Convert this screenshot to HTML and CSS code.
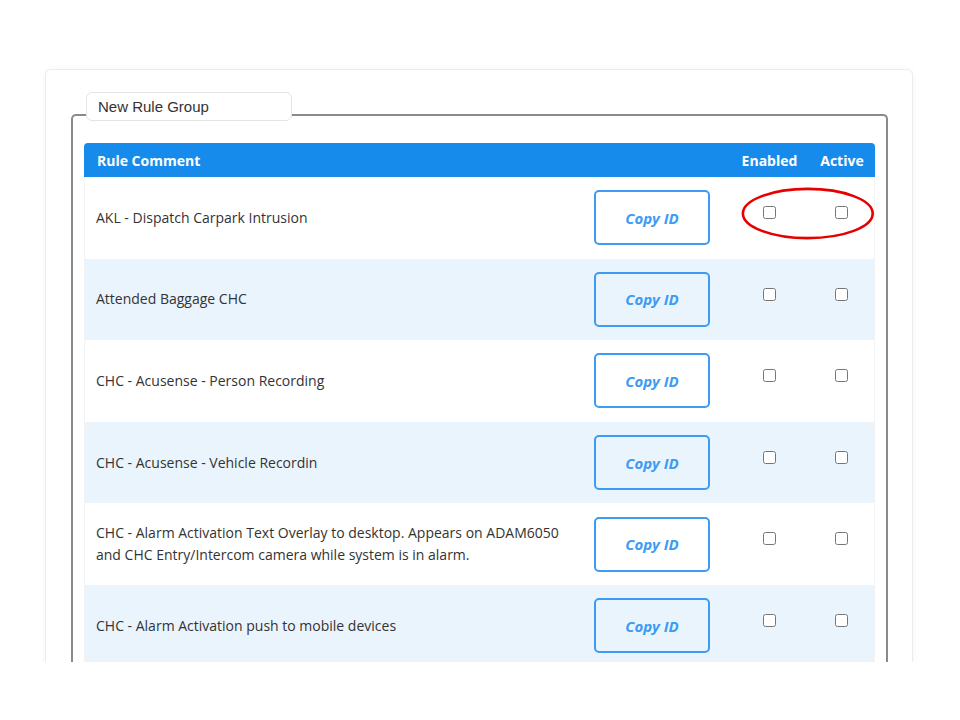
FILE: index.html
```html
<!DOCTYPE html>
<html lang="en">
<head>
<meta charset="utf-8">
<title>Rule Groups</title>
<link rel="stylesheet" href="styles.css">
</head>
<body>
<div class="page">
  <div class="card">
    <div class="group">
      <div class="group-name">New Rule Group</div>
      <div class="rules">
        <table class="rule-table">
          <colgroup>
            <col class="col-comment">
            <col class="col-action">
            <col class="col-enabled">
            <col class="col-active">
          </colgroup>
          <thead>
            <tr>
              <th class="th-comment">Rule Comment</th>
              <th></th>
              <th class="th-check">Enabled</th>
              <th class="th-check">Active</th>
            </tr>
          </thead>
          <tbody>
            <tr>
              <td class="comment">AKL - Dispatch Carpark Intrusion</td>
              <td class="action"><button class="copy-btn" type="button">Copy ID</button></td>
              <td class="check"><input type="checkbox"></td>
              <td class="check"><input type="checkbox"></td>
            </tr>
            <tr>
              <td class="comment">Attended Baggage CHC</td>
              <td class="action"><button class="copy-btn" type="button">Copy ID</button></td>
              <td class="check"><input type="checkbox"></td>
              <td class="check"><input type="checkbox"></td>
            </tr>
            <tr>
              <td class="comment">CHC - Acusense - Person Recording</td>
              <td class="action"><button class="copy-btn" type="button">Copy ID</button></td>
              <td class="check"><input type="checkbox"></td>
              <td class="check"><input type="checkbox"></td>
            </tr>
            <tr>
              <td class="comment">CHC - Acusense - Vehicle Recordin</td>
              <td class="action"><button class="copy-btn" type="button">Copy ID</button></td>
              <td class="check"><input type="checkbox"></td>
              <td class="check"><input type="checkbox"></td>
            </tr>
            <tr>
              <td class="comment">CHC - Alarm Activation Text Overlay to desktop. Appears on ADAM6050 and CHC Entry/Intercom camera while system is in alarm.</td>
              <td class="action"><button class="copy-btn" type="button">Copy ID</button></td>
              <td class="check"><input type="checkbox"></td>
              <td class="check"><input type="checkbox"></td>
            </tr>
            <tr>
              <td class="comment">CHC - Alarm Activation push to mobile devices</td>
              <td class="action"><button class="copy-btn" type="button">Copy ID</button></td>
              <td class="check"><input type="checkbox"></td>
              <td class="check"><input type="checkbox"></td>
            </tr>
          </tbody>
        </table>
        <!-- highlight ring around the first rule's toggles -->
        <svg class="highlight" width="134" height="53" viewBox="0 0 134 53" aria-hidden="true">
          <ellipse cx="66.8" cy="26.5" rx="64.9" ry="24.6" fill="none" stroke="#e60000" stroke-width="2.6"/>
        </svg>
      </div>
    </div>
  </div>
</div>
</body>
</html>
```

FILE: styles.css
```css
html, body {
  margin: 0;
  background: #ffffff;
}

.page {
  height: 662px;
  overflow: hidden;
  box-sizing: border-box;
  padding: 69px 0 0 45px;
}

.card {
  width: 868px;
  min-height: 700px;
  box-sizing: border-box;
  padding: 44px 24px 0 25px;
  background: #ffffff;
  border: 1px solid #ececec;
  border-radius: 6px;
  box-shadow: 0 0 6px rgba(0, 0, 0, 0.04);
}

/* fieldset-like group frame */
.group {
  min-height: 640px;
  border: 2px solid #8a8a8a;
  border-bottom: none;
  border-radius: 5px 5px 0 0;
  padding: 0 11px;
}

.group-name {
  width: 206px;
  height: 29px;
  box-sizing: border-box;
  margin: -24px 0 0 2px;
  padding-left: 11px;
  background: #ffffff;
  border: 1px solid #e4e4e4;
  border-radius: 6px;
  font-family: "Liberation Sans", Arial, sans-serif;
  font-size: 15px;
  line-height: 27px;
  color: #333333;
}

.rules {
  position: relative;
  margin-top: 22px;
}

.rule-table {
  width: 100%;
  table-layout: fixed;
  border-collapse: separate;
  border-spacing: 0;
  font-family: "Open Sans", "Noto Sans", sans-serif;
  font-size: 14px;
  color: #333333;
}

.col-comment { width: 498px; }
.col-action { width: 148px; }
.col-enabled { width: 79px; }
.col-active { width: 66px; }

.rule-table th {
  height: 34px;
  padding: 0 12px;
  background: #178beb;
  color: #ffffff;
  font-weight: 700;
  font-size: 14px;
  text-align: left;
  white-space: nowrap;
}

.rule-table th:first-child { border-top-left-radius: 4px; }
.rule-table th:last-child { border-top-right-radius: 4px; }

.rule-table .th-comment { padding-left: 13px; }
.rule-table .th-check { text-align: center; padding: 0; }

.rule-table td {
  height: 81.6px;
  padding: 0 12px;
  vertical-align: middle;
  line-height: 22px;
}

.rule-table td.comment { padding-left: 11px; }

.rule-table td:first-child { border-left: 1px solid #f1f3f5; }
.rule-table td:last-child { border-right: 1px solid #f1f3f5; }

.rule-table tbody tr:nth-child(even) td {
  background: #eaf4fd;
}

/* toggles sit a little above the row's middle */
.rule-table td.check {
  height: auto;
  vertical-align: top;
  padding: 29px 0 0;
  text-align: center;
}

.check input {
  width: 13px;
  height: 13px;
  margin: 0;
  vertical-align: top;
}

.copy-btn {
  display: block;
  width: 116px;
  height: 55px;
  padding: 0;
  background: transparent;
  border: 2px solid #3d9bf2;
  border-radius: 5px;
  color: #3d9bf2;
  font-family: "Open Sans", "Noto Sans", sans-serif;
  font-size: 15px;
  font-weight: 700;
  font-style: italic;
  cursor: pointer;
}

.highlight {
  position: absolute;
  left: 657px;
  top: 44px;
}
```
